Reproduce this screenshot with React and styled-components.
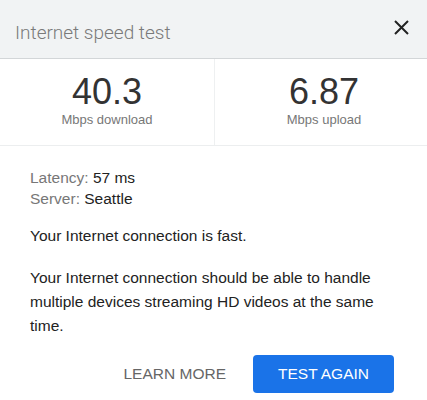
import React from 'react';
import styled, { createGlobalStyle } from 'styled-components';

const GlobalStyle = createGlobalStyle`
    html, body {
        margin: 0;
        padding: 0;
        background: #ffffff;
        font-family: "Liberation Sans", Arial, sans-serif;
    }
`;

const Card = styled.div`
    width: 427px;
    height: 400px;
    display: flex;
    flex-direction: column;
    background: #ffffff;
    overflow: hidden;
`;

const Header = styled.div`
    height: 59px;
    display: flex;
    align-items: center;
    justify-content: space-between;
    padding: 0 16px 0 15px;
    background: #f1f3f4;
    border-bottom: 1px solid #d3d6d8;
    box-sizing: border-box;
`;

const Title = styled.h1`
    margin: 6px 0 0;
    font-family: Roboto, "Liberation Sans", sans-serif;
    font-weight: 300;
    font-size: 19px;
    color: #7a7a7a;
`;

const CloseButton = styled.button`
    border: 0;
    background: none;
    padding: 0;
    width: 20px;
    height: 20px;
    display: flex;
    align-items: center;
    justify-content: center;
    margin-top: -4px;
    cursor: pointer;
`;

const Stats = styled.div`
    display: grid;
    grid-template-columns: 214px 1fr;
    height: 86px;
    border-bottom: 1px solid #eceeef;
`;

const Stat = styled.div`
    display: flex;
    flex-direction: column;
    align-items: center;
    padding-top: 14px;
    border-left: ${props => props.divided ? '1px solid #eef0f1' : 'none'};
    padding-left: ${props => props.divided ? '6px' : '0'};
`;

const Value = styled.div`
    font-size: 36px;
    line-height: 38px;
    color: #333333;
`;

const Unit = styled.div`
    font-size: 13px;
    color: #777777;
    margin-top: 1px;
`;

const Body = styled.div`
    padding: 21px 30px 0;
    font-size: 15.5px;
    color: #222222;
`;

const InfoLine = styled.div`
    line-height: 21px;
`;

const Label = styled.span`
    color: #777777;
`;

const Para = styled.p`
    margin: ${props => props.first ? '15px 0 0' : '18px 0 0'};
    line-height: 24px;
`;

const Actions = styled.div`
    display: flex;
    justify-content: flex-end;
    align-items: center;
    gap: 27px;
    padding: 17px 33px 0 0;
`;

const TextButton = styled.button`
    border: 0;
    background: none;
    font-family: "Liberation Sans", Arial, sans-serif;
    font-size: 15.5px;
    color: #666666;
    padding: 0;
`;

const PrimaryButton = styled.button`
    width: 141px;
    height: 38px;
    border: 0;
    border-radius: 4px;
    background: #1a73e8;
    color: #ffffff;
    font-family: "Liberation Sans", Arial, sans-serif;
    font-size: 15.5px;
`;

const App = () => {
    return (
        <Card>
            <GlobalStyle />
            <Header>
                <Title>Internet speed test</Title>
                <CloseButton aria-label="Close">
                    <svg width="15" height="15" viewBox="0 0 15 15">
                        <path d="M1 1 L14 14 M14 1 L1 14" stroke="#222" strokeWidth="2" />
                    </svg>
                </CloseButton>
            </Header>
            <Stats>
                <Stat>
                    <Value>40.3</Value>
                    <Unit>Mbps download</Unit>
                </Stat>
                <Stat divided>
                    <Value>6.87</Value>
                    <Unit>Mbps upload</Unit>
                </Stat>
            </Stats>
            <Body>
                <InfoLine><Label>Latency:</Label> 57 ms</InfoLine>
                <InfoLine><Label>Server:</Label> Seattle</InfoLine>
                <Para first>Your Internet connection is fast.</Para>
                <Para>Your Internet connection should be able to handle multiple devices streaming HD videos at the same time.</Para>
            </Body>
            <Actions>
                <TextButton>LEARN MORE</TextButton>
                <PrimaryButton>TEST AGAIN</PrimaryButton>
            </Actions>
        </Card>
    );
};

export default App;
